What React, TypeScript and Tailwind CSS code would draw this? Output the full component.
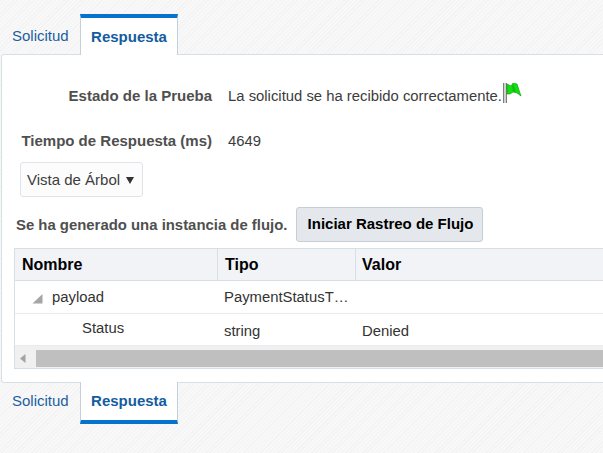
const hatch =
  "bg-[#f6f6f6] bg-[repeating-linear-gradient(135deg,#f3f3f3_0px,#f3f3f3_1px,#f8f8f8_1px,#f8f8f8_3px)]";

function Tabs({ bottom }: { bottom?: boolean }) {
  return (
    <div className={bottom ? "flex h-[41px] items-start" : "flex h-[40px] items-end"}>
      <div className={bottom ? "flex h-[37px] w-[80px] items-center pl-3 text-[15px] text-[#1d5f9f]" : "flex h-[37px] w-[80px] items-center pl-3 pt-[1px] text-[15px] text-[#1d5f9f]"}>Solicitud</div>
      <div
        className={
          bottom
            ? "relative z-10 -mt-px flex h-[42px] w-[98px] items-center justify-center border-x border-b-4 border-x-[#c4d0dc] border-b-[#0572ce] bg-white pt-[1px] text-[15px] font-bold text-[#145c9e]"
            : "relative z-10 -mb-px flex h-[41px] w-[98px] items-center justify-center border-x border-t-4 border-x-[#c4d0dc] border-t-[#0572ce] bg-white pt-[2px] text-[15px] font-bold text-[#145c9e]"
        }
      >
        Respuesta
      </div>
    </div>
  );
}

function Flag() {
  return (
    <svg width="19" height="21" viewBox="0 0 19 21" className="-mt-[7px] -mb-[2px] ml-px shrink-0">
      <rect x="0" y="0" width="4" height="20" fill="#7d7d7d" />
      <rect x="1" y="0" width="2" height="20" fill="#cfcfcf" />
      <path d="M4 1 L8 3 L10 0 L14 1 L18 13 L14 10 L10 9 L7 11 L4 11 Z" fill="#10e010" stroke="#0b960b" strokeWidth="0.6" />
      <path d="M9 3 L10 1 L13 9 L10 9 Z" fill="#0cc00c" />
    </svg>
  );
}

function Row({ name, type, value, indent, expanded, h, cellPad }: { name: string; type: string; value?: string; indent: string; expanded?: boolean; h: string; cellPad?: string }) {
  return (
    <div className={`grid grid-cols-[203px_138px_1fr] border-b border-[#e8ecf0] text-[#333] ${h}`}>
      <div className={`flex items-center ${indent}`}>
        {expanded && (
          <svg width="11" height="11" viewBox="0 0 11 11" className="mr-[9px] mt-[2px]">
            <path d="M10.5 1 V10.5 H0.5 Z" fill="#a6a6a6" />
          </svg>
        )}
        <span className={expanded ? "" : "-mt-[3px]"}>{name}</span>
      </div>
      <div className={`flex items-center pl-[6px] ${cellPad ?? ""}`}>{type}</div>
      <div className={`flex items-center pl-[6px] ${cellPad ?? ""}`}>{value}</div>
    </div>
  );
}

export default function App() {
  return (
    <div
      className={`h-[453px] w-[603px] overflow-hidden text-[14.85px] font-['Liberation_Sans',Arial,sans-serif] ${hatch}`}
    >
      <div className="h-[14px]" />
      <Tabs />
      <div className="ml-px h-[329px] w-[640px] rounded-tl-[3px] rounded-bl-[3px] border border-[#d6dfe6] bg-white">
        <div className="flex items-center pt-[33px] leading-4">
          <div className="w-[210px] text-right text-[15px] font-bold text-[#4f4f4f]">Estado de la Prueba</div>
          <div className="flex items-center pl-[16px] text-[#3c3c3c]">
            La solicitud se ha recibido correctamente.
            <Flag />
          </div>
        </div>
        <div className="flex items-center pt-[29px] leading-4">
          <div className="w-[210px] text-right text-[15px] font-bold text-[#4f4f4f]">Tiempo de Respuesta (ms)</div>
          <div className="pl-[16px] text-[#3c3c3c]">4649</div>
        </div>
        <div className="ml-[18px] mt-[13px] flex h-[35px] w-[123px] items-center rounded-[3px] border border-[#dfe4ea] bg-[#fcfcfd] pl-[6px] pt-[2px] text-[15px] text-[#3c3c3c]">
          Vista de Árbol
          <svg width="8" height="7" viewBox="0 0 8 7" className="ml-[6px]">
            <path d="M0 0 H8 L4 7 Z" fill="#333" />
          </svg>
        </div>
        <div className="ml-[14px] mt-[10px] flex items-center">
          <span className="w-[272px] pt-[2px] text-[14.9px] font-bold text-[#4f4f4f]">Se ha generado una instancia de flujo.</span>
          <button className="ml-2 h-[35px] w-[187px] rounded-[3px] border border-[#c4ced7] bg-[#e4e8ec] pl-[2px] text-[15px] font-bold text-[#000]">
            Iniciar Rastreo de Flujo
          </button>
        </div>
        <div className="ml-[12px] mt-[6px] border border-[#d6dfe6]">
          <div className="grid h-[32px] grid-cols-[203px_138px_1fr] border-b border-[#d6dfe6] bg-[#f1f3f7] text-[16px] font-bold text-black">
            <div className="flex items-center border-r border-[#d6dfe6] pl-[7px]">Nombre</div>
            <div className="flex items-center border-r border-[#d6dfe6] pl-[7px]">Tipo</div>
            <div className="flex items-center pl-[6px]">Valor</div>
          </div>
          <Row name="payload" type="PaymentStatusT…" indent="pl-[17px]" expanded h="h-[33px]" />
          <Row name="Status" type="string" value="Denied" indent="pl-[67px]" h="h-[32px]" cellPad="pt-[3px]" />
          <div className="flex h-[22px] items-center bg-[#f0f0f0] pl-[5px] pt-[2px]">
            <svg width="6" height="9" viewBox="0 0 6 9" className="mr-[10px]">
              <path d="M5.5 0 V9 L0 4.5 Z" fill="#a3a3a3" />
            </svg>
            <div className="h-[17px] flex-1 bg-[#bfbfbf]" />
          </div>
        </div>
      </div>
      <Tabs bottom />
    </div>
  );
}
